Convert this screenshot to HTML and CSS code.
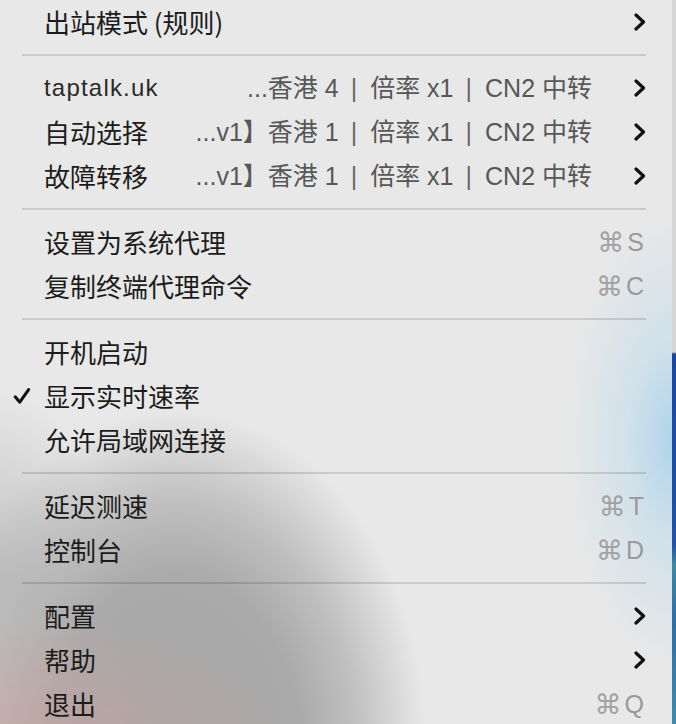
FILE: index.html
```html
<!DOCTYPE html>
<html lang="zh-CN">
<head>
<meta charset="utf-8">
<title>ClashX 菜单</title>
<link rel="stylesheet" href="styles.css">
</head>
<body>
<div class="screen">
  <div class="menu">
    <div class="item">
      <span class="check"></span>
      <span class="label">出站模式 (规则)</span>
      <span class="spacer"></span>
      <svg class="chev" viewBox="0 0 12 18"><path d="M2 2 L9.5 9 L2 16"/></svg>
    </div>
    <div class="sep"></div>
    <div class="item">
      <span class="check"></span>
      <span class="label latin">taptalk.uk</span>
      <span class="spacer"></span>
      <span class="value">...香港 4<span class="bar">|</span>倍率 x1<span class="bar">|</span>CN2 中转</span>
      <svg class="chev" viewBox="0 0 12 18"><path d="M2 2 L9.5 9 L2 16"/></svg>
    </div>
    <div class="item">
      <span class="check"></span>
      <span class="label">自动选择</span>
      <span class="spacer"></span>
      <span class="value">...v1】香港 1<span class="bar">|</span>倍率 x1<span class="bar">|</span>CN2 中转</span>
      <svg class="chev" viewBox="0 0 12 18"><path d="M2 2 L9.5 9 L2 16"/></svg>
    </div>
    <div class="item">
      <span class="check"></span>
      <span class="label">故障转移</span>
      <span class="spacer"></span>
      <span class="value">...v1】香港 1<span class="bar">|</span>倍率 x1<span class="bar">|</span>CN2 中转</span>
      <svg class="chev" viewBox="0 0 12 18"><path d="M2 2 L9.5 9 L2 16"/></svg>
    </div>
    <div class="sep"></div>
    <div class="item">
      <span class="check"></span>
      <span class="label">设置为系统代理</span>
      <span class="spacer"></span>
      <span class="key"><span class="cmd">⌘</span>S</span>
    </div>
    <div class="item">
      <span class="check"></span>
      <span class="label">复制终端代理命令</span>
      <span class="spacer"></span>
      <span class="key"><span class="cmd">⌘</span>C</span>
    </div>
    <div class="sep"></div>
    <div class="item">
      <span class="check"></span>
      <span class="label">开机启动</span>
    </div>
    <div class="item">
      <span class="check"><svg viewBox="0 0 18 18"><path d="M2.2 9.8 L6.8 15.2 L15.6 2.6"/></svg></span>
      <span class="label">显示实时速率</span>
    </div>
    <div class="item">
      <span class="check"></span>
      <span class="label">允许局域网连接</span>
    </div>
    <div class="sep"></div>
    <div class="item">
      <span class="check"></span>
      <span class="label">延迟测速</span>
      <span class="spacer"></span>
      <span class="key"><span class="cmd">⌘</span>T</span>
    </div>
    <div class="item">
      <span class="check"></span>
      <span class="label">控制台</span>
      <span class="spacer"></span>
      <span class="key"><span class="cmd">⌘</span>D</span>
    </div>
    <div class="sep"></div>
    <div class="item">
      <span class="check"></span>
      <span class="label">配置</span>
      <span class="spacer"></span>
      <svg class="chev" viewBox="0 0 12 18"><path d="M2 2 L9.5 9 L2 16"/></svg>
    </div>
    <div class="item">
      <span class="check"></span>
      <span class="label">帮助</span>
      <span class="spacer"></span>
      <svg class="chev" viewBox="0 0 12 18"><path d="M2 2 L9.5 9 L2 16"/></svg>
    </div>
    <div class="item">
      <span class="check"></span>
      <span class="label">退出</span>
      <span class="spacer"></span>
      <span class="key"><span class="cmd">⌘</span>Q</span>
    </div>
  </div>
  <div class="edge"></div>
</div>
</body>
</html>
```
FILE: styles.css
```css
html, body {
  margin: 0;
  padding: 0;
}
body {
  width: 676px;
  height: 724px;
  overflow: hidden;
  font-family: "Noto Sans CJK SC", "Noto Sans", sans-serif;
}
.screen {
  display: flex;
  width: 676px;
  height: 724px;
}
.menu {
  width: 672px;
  height: 724px;
  display: flex;
  flex-direction: column;
  background:
    radial-gradient(ellipse 110px 230px at 676px 440px, rgba(172, 210, 234, 0.95) 0%, rgba(192, 220, 236, 0.55) 45%, rgba(232, 232, 232, 0) 100%),
    radial-gradient(ellipse 260px 120px at 30px 735px, rgba(205, 160, 155, 0.55) 0%, rgba(205, 160, 155, 0) 100%),
    radial-gradient(ellipse 110px 190px at 0px 580px, rgba(176, 176, 176, 0.7) 0%, rgba(176, 176, 176, 0) 100%),
    radial-gradient(ellipse 250px 330px at 175px 740px, #a7a7a7 0%, #aaaaaa 50%, rgba(178, 178, 178, 0.75) 72%, rgba(232, 232, 232, 0) 100%),
    #e8e8e8;
}
.edge {
  width: 4px;
  height: 724px;
  background: linear-gradient(to bottom, #d6d6d6 0, #d6d6d6 352px, #1d45a3 354px, #2152a8 545px, #3b8aa6 565px, #2a6fa8 620px, #3c8cb0 724px);
}
.item {
  height: 44px;
  display: flex;
  align-items: center;
  padding: 0 28px 0 12px;
  color: #1c1c1c;
  font-size: 26px;
  line-height: 1;
  flex: none;
}
.check {
  width: 32px;
  height: 24px;
  display: flex;
  align-items: center;
  flex: none;
}
.check svg {
  width: 18px;
  height: 18px;
  margin-left: 1px;
  fill: none;
  stroke: #111;
  stroke-width: 3;
  stroke-linecap: round;
  stroke-linejoin: round;
}
.label {
  white-space: nowrap;
}
.latin {
  font-family: "Liberation Sans", sans-serif;
  font-size: 24px;
  letter-spacing: 1.2px;
  color: #2a2a2a;
}
.spacer {
  flex: 1;
}
.value {
  color: #575757;
  font-family: "Liberation Sans", "Noto Sans CJK SC", sans-serif;
  font-size: 25px;
  white-space: nowrap;
  margin-right: 42px;
}
.bar {
  margin: 0 13px 0 12px;
  font-weight: 300;
  color: #6a6a6a;
}
.chev {
  width: 12px;
  height: 18px;
  flex: none;
  margin-right: -2px;
  fill: none;
  stroke: #111;
  stroke-width: 3.2;
  stroke-linecap: round;
  stroke-linejoin: round;
}
.key {
  color: #9a9a9a;
  font-family: "Liberation Sans", "DejaVu Sans", sans-serif;
  font-size: 25px;
  display: flex;
  align-items: center;
}
.cmd {
  font-family: "DejaVu Sans", sans-serif;
  font-size: 27px;
  margin-right: 3px;
  color: #a2a2a2;
}
.sep {
  height: 2px;
  margin: 10px 26px 10px 22px;
  background: rgba(0, 0, 0, 0.13);
  flex: none;
}
```
